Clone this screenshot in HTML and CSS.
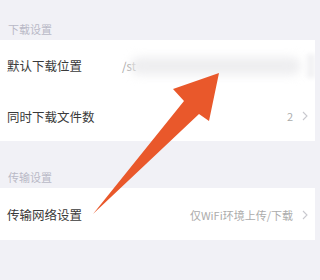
FILE: index.html
```html
<!DOCTYPE html>
<html lang="zh">
<head>
<meta charset="utf-8">
<link rel="stylesheet" href="styles.css">
</head>
<body>
<div class="page">
  <div class="section-title first">下载设置</div>
  <div class="card">
    <div class="row">
      <span class="label">默认下载位置</span>
      <div class="path">
        <span class="path-text">/st</span>
        <div class="smudge"></div>
      </div>
      <div class="smudge-end"></div>
    </div>
    <div class="row">
      <span class="label">同时下载文件数</span>
      <span class="value">2</span>
      <svg class="chev" viewBox="0 0 6 10" width="6" height="10"><path d="M1 1 L5 5 L1 9" fill="none" stroke="#c9c9cf" stroke-width="1.1"/></svg>
    </div>
  </div>
  <div class="section-title second">传输设置</div>
  <div class="card">
    <div class="row tall">
      <span class="label">传输网络设置</span>
      <span class="value">仅WiFi环境上传/下载</span>
      <svg class="chev" viewBox="0 0 6 10" width="6" height="10"><path d="M1 1 L5 5 L1 9" fill="none" stroke="#c9c9cf" stroke-width="1.1"/></svg>
    </div>
  </div>
</div>
<svg class="arrow" viewBox="0 0 315 280" width="315" height="280">
  <polygon points="93,214 184,101 173,89 219,73 209,121 199,114" fill="#e9582b"/>
</svg>
</body>
</html>
```
FILE: styles.css
```css
html, body {
  margin: 0;
  padding: 0;
}
body {
  width: 315px;
  height: 280px;
  background: #f1f1f6;
  font-family: "Noto Sans CJK SC", "Noto Sans", sans-serif;
  position: relative;
  overflow: hidden;
}
.page {
  display: flex;
  flex-direction: column;
}
.section-title {
  display: flex;
  align-items: flex-end;
  padding: 0 0 4px 8px;
  font-size: 11px;
  line-height: 14px;
  color: #b9b9c6;
  box-sizing: border-box;
}
.section-title.first {
  height: 40px;
}
.section-title.second {
  height: 47px;
}
.card {
  background: #ffffff;
  display: flex;
  flex-direction: column;
}
.row {
  height: 50.5px;
  display: flex;
  align-items: center;
  padding: 1px 7px 0 7px;
  box-sizing: border-box;
}
.row.tall {
  height: 52px;
}
.label {
  font-size: 12.5px;
  color: #3a3a3a;
  flex: none;
}
.path {
  flex: 1;
  display: flex;
  align-items: center;
  margin-left: 40px;
  min-width: 0;
}
.path-text {
  font-size: 11.5px;
  color: #a0a0a0;
  flex: none;
}
.smudge {
  flex: 1;
  height: 18px;
  margin-left: -6px;
  background: #eeeef0;
  border-radius: 9px;
  filter: blur(5px);
}
.smudge-end {
  width: 8px;
  height: 24px;
  margin-left: 6px;
  margin-right: -7px;
  background: #f2f2f4;
  filter: blur(2px);
}
.value {
  margin-left: auto;
  font-size: 11px;
  color: #acacac;
}
.chev {
  margin-left: 9px;
  flex: none;
}
.arrow {
  position: absolute;
  left: 0;
  top: 0;
}
```
